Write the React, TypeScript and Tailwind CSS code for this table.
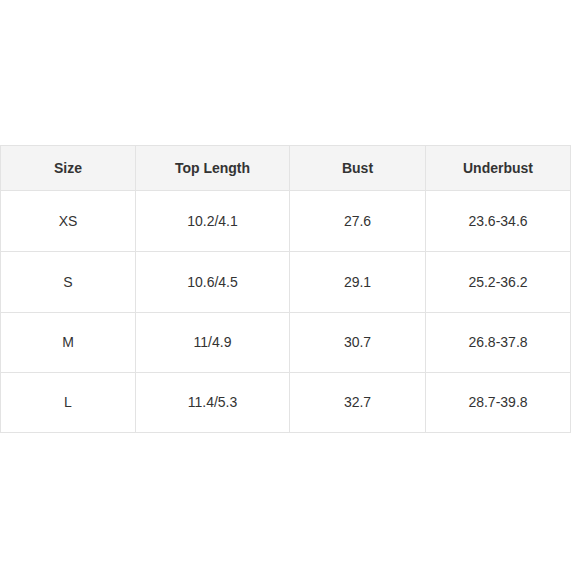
const headers = ["Size", "Top Length", "Bust", "Underbust"];

const rows = [
  ["XS", "10.2/4.1", "27.6", "23.6-34.6"],
  ["S", "10.6/4.5", "29.1", "25.2-36.2"],
  ["M", "11/4.9", "30.7", "26.8-37.8"],
  ["L", "11.4/5.3", "32.7", "28.7-39.8"],
];

const widths = ["w-[135px]", "w-[154px]", "w-[136px]", "w-[145px]"];

export default function App() {
  return (
    <div className="w-[580px] h-[580px] bg-white pt-[145px] font-['Liberation_Sans',Arial,sans-serif] text-[14px] text-[#333]">
      <table className="border-collapse w-[571px] table-fixed">
        <thead>
          <tr className="h-[45px] bg-[#f4f4f4]">
            {headers.map((h, i) => (
              <th
                key={h}
                className={`${widths[i]} border border-[#e3e3e3] font-bold text-center`}
              >
                {h}
              </th>
            ))}
          </tr>
        </thead>
        <tbody>
          {rows.map((row, r) => (
            <tr key={row[0]} className={r >= 2 ? "h-[60px]" : "h-[61px]"}>
              {row.map((cell, i) => (
                <td key={i} className="border border-[#e3e3e3] text-center">
                  {cell}
                </td>
              ))}
            </tr>
          ))}
        </tbody>
      </table>
    </div>
  );
}
